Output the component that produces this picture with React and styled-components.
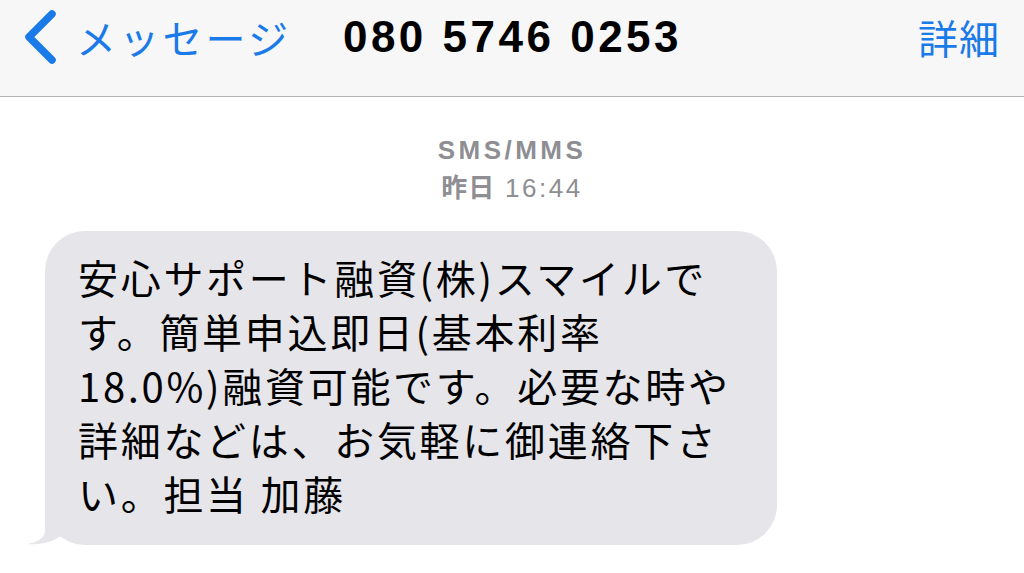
import React from 'react';
import styled, { createGlobalStyle } from 'styled-components';

const Global = createGlobalStyle`
  html, body {
    margin: 0;
    padding: 0;
    background: #ffffff;
  }
  body {
    font-family: "Noto Sans CJK JP", "Liberation Sans", sans-serif;
  }
`;

const Screen = styled.div`
  width: 1024px;
  height: 573px;
  overflow: hidden;
  background: #ffffff;
`;

const NavBar = styled.div`
  height: 97px;
  box-sizing: border-box;
  background: #f7f7f7;
  border-bottom: 1.5px solid #b2b2b2;
  display: grid;
  grid-template-columns: 1fr auto 1fr;
  align-items: center;
  padding: 0 24px 22px 23px;
`;

const BackButton = styled.div`
  display: flex;
  align-items: center;
  gap: 19px;
  color: #1a7ae8;
  font-size: 40px;
  letter-spacing: 3.2px;
`;

const Title = styled.div`
  font-family: "Liberation Sans", "Noto Sans CJK JP", sans-serif;
  font-weight: 700;
  font-size: 44px;
  color: #000;
  letter-spacing: 3.5px;
  margin-left: 2px;
`;

const Detail = styled.div`
  justify-self: end;
  color: #1a7ae8;
  font-size: 40px;
  letter-spacing: 1px;
`;

const Thread = styled.div`
  padding: 36px 0 0 45px;
  display: flex;
  flex-direction: column;
`;

const Stamp = styled.div`
  text-align: center;
  color: #8e8e93;
  font-size: 26px;
  line-height: 35px;
  margin-left: -45px;
  font-family: "Liberation Sans", "Noto Sans CJK JP", sans-serif;
  font-weight: ${({ bold }) => (bold ? 700 : 400)};
  letter-spacing: ${({ bold }) => (bold ? 3.5 : 2.5)}px;
  b {
    font-family: "Noto Sans CJK JP", sans-serif;
    font-weight: 700;
    letter-spacing: 1px;
  }
`;

const Bubble = styled.div`
  position: relative;
  margin-top: 25px;
  width: 732px;
  box-sizing: border-box;
  padding: 19px 10px 25px 33px;
  background: #e5e5ea;
  border-radius: 40px;
  color: #000;
  font-size: 40px;
  line-height: 54px;
  letter-spacing: 2.7px;
  white-space: nowrap;
`;

const Tail = styled.svg`
  position: absolute;
  left: -17px;
  bottom: 0;
`;

export default function App() {
  return (
    <Screen>
      <Global />
      <NavBar>
        <BackButton>
          <svg width="34" height="56" viewBox="0 0 34 56">
            <path d="M29 5 L6 28 L29 51" fill="none" stroke="#1a7ae8" strokeWidth="7.5" strokeLinecap="round" strokeLinejoin="round" />
          </svg>
          <span>メッセージ</span>
        </BackButton>
        <Title>080 5746 0253</Title>
        <Detail>詳細</Detail>
      </NavBar>
      <Thread>
        <Stamp bold>SMS/MMS</Stamp>
        <Stamp><b>昨日</b> 16:44</Stamp>
        <Bubble>
          <Tail width="50" height="40" viewBox="0 0 50 40">
            <path d="M17 0 L17 26 C17 32 11 37 0 39 C12 40 24 37 33 31 L33 0 Z" fill="#e5e5ea" />
          </Tail>
          安心サポート融資(株)スマイルで<br />
          す。簡単申込即日(基本利率<br />
          18.0%)融資可能です。必要な時や<br />
          詳細などは、お気軽に御連絡下さ<br />
          い。担当 加藤
        </Bubble>
      </Thread>
    </Screen>
  );
}
